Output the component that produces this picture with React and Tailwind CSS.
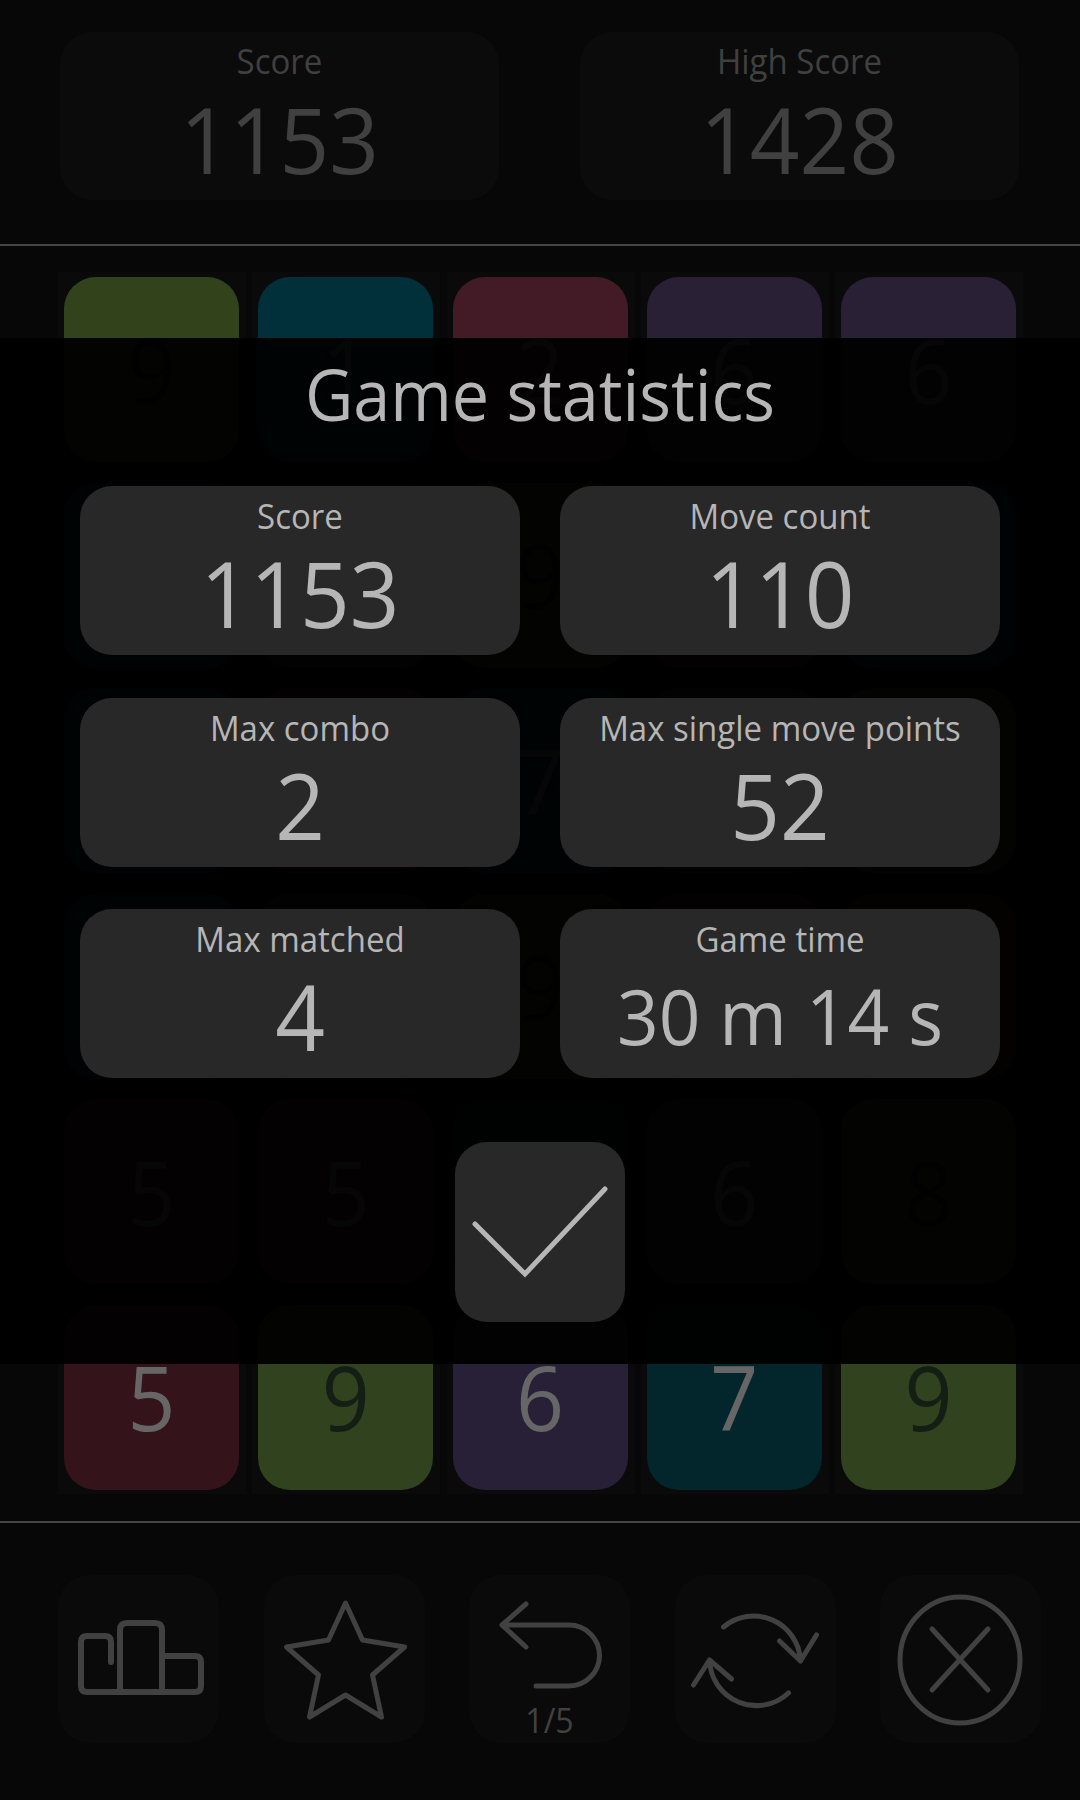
const TILE = {
  g: ["bg-[#32431c]", "text-[#151e15]"],
  t: ["bg-[#02303a]", "text-[#666666]"],
  r: ["bg-[#421b26]", "text-[#666666]"],
  p: ["bg-[#2a2036]", "text-[#666666]"],
  o: ["bg-[#4a2c10]", "text-[#666666]"],
  d: ["bg-[#34141a]", "text-[#666666]"],
  e: ["bg-[#02262c]", "text-[#666666]"],
  q: ["bg-[#282036]", "text-[#666666]"],
  h: ["bg-[#30421e]", "text-[#151e15]"],
};

const BOARD = [
  [["g", 9], ["t", 1], ["r", 2], ["p", 6], ["p", 6]],
  [["t", 1], ["p", 6], ["g", 9], ["r", 2], ["t", 7]],
  [["t", 7], ["r", 5], ["t", 7], ["p", 6], ["g", 9]],
  [["t", 1], ["p", 6], ["g", 9], ["r", 2], ["o", 3]],
  [["d", 5], ["d", 5], ["e", 7], ["q", 6], ["h", 8]],
  [["d", 5], ["h", 9], ["q", 6], ["e", 7], ["h", 9]],
];

const STATS = [
  ["Score", "1153", "text-[87px]"],
  ["Move count", "110", "text-[87px]"],
  ["Max combo", "2", "text-[87px]"],
  ["Max single move points", "52", "text-[87px]"],
  ["Max matched", "4", "text-[87px]"],
  ["Game time", "30 m 14 s", "text-[73px]"],
];

function HeaderCard({ label, value }) {
  return (
    <div className="w-[439px] h-[168px] rounded-[32px] bg-[#0b0b0b] flex flex-col items-center text-[#404040]">
      <div className="text-[33px] leading-[44px] mt-[7px] scale-y-[1.06]">{label}</div>
      <div className="text-[87px] leading-[100px] mt-[5px] scale-y-[1.06]">{value}</div>
    </div>
  );
}

function Stat({ label, value, size }) {
  return (
    <div className="h-[169px] rounded-[32px] bg-[#282828] flex flex-col items-center text-[#b6b6b6]">
      <div className="text-[33px] leading-[44px] mt-[8px] scale-y-[1.06]">{label}</div>
      <div className={`${size} leading-[100px] mt-[4px] whitespace-nowrap scale-y-[1.06]`}>{value}</div>
    </div>
  );
}

function Bar({ children, view, extra }) {
  return (
    <div className="relative w-[161px] h-[168px] rounded-[32px] bg-[#0a0a0a]">
      <svg className="w-full h-full" viewBox={view} fill="none" stroke="#414141" strokeWidth="5" strokeLinecap="round" strokeLinejoin="round">
        {children}
      </svg>
      {extra}
    </div>
  );
}

export default function App() {
  return (
    <div className="relative w-[1080px] h-[1800px] overflow-hidden bg-[#070707] font-['Open_Sans',sans-serif]">
      <div className="h-[244px] pt-[32px] pl-[60px] flex gap-[81px]">
        <HeaderCard label="Score" value="1153" />
        <HeaderCard label="High Score" value="1428" />
      </div>
      <div className="h-[2px] bg-[#454545]" />

      <div className="mt-[26px] ml-[58px] w-[965px] grid grid-cols-[repeat(5,188px)] auto-rows-[194px] gap-x-[6.25px] gap-y-[11.6px]">
        {BOARD.flat().map(([c, n], i) => (
          <div key={i} className="bg-[#0a0a0a] pl-[6px] pr-[7px] pt-[5px] pb-[4px]">
            <div className={`h-full rounded-[32px] flex items-center justify-center text-[84px] ${TILE[c][0]} ${TILE[c][1]}`}>
              <span className="scale-y-[1.06]">{n}</span>
            </div>
          </div>
        ))}
      </div>

      <div className="mt-[27px] h-[2px] bg-[#454545]" />
      <div className="pt-[52px] pl-[58px] flex gap-[44.5px]">
        <Bar view="58 1575 161 168">
          <g strokeWidth="6">
            <path d="M111 1662V1642Q111 1636 105 1636H87Q81 1636 81 1642V1686Q81 1692 87 1692H195Q201 1692 201 1686V1662Q201 1656 195 1656H162" />
            <path d="M120 1692V1630Q120 1623 127 1623H155Q162 1623 162 1630V1692" />
          </g>
        </Bar>
        <Bar view="263.5 1575 161 168">
          <path d="M345 1603L362 1640L404 1647L372 1675L381 1717L345 1695L309 1717L318 1675L286 1647L328 1640Z" />
        </Bar>
        <Bar
          view="469 1575 161 168"
          extra={<div className="absolute left-0 right-0 top-[123px] text-center text-[32px] leading-[44px] text-[#414141] scale-y-[1.06]">1/5</div>}
        >
          <path d="M526 1604L502 1625L526 1647M502 1625H569A30.5 30.5 0 0 1 569 1686H536" />
        </Bar>
        <Bar view="674.5 1575 161 168">
          <path d="M723 1627A47 47 0 0 1 800 1660M779 1641L800 1661L816 1635" />
          <path d="M788 1693A47 47 0 0 1 709 1660M693 1685L709 1660L731 1679" />
        </Bar>
        <Bar view="880 1575 161 168">
          <ellipse cx="960" cy="1660" rx="60" ry="63" />
          <path d="M932 1629L988 1690M988 1629L932 1690" />
        </Bar>
      </div>

      <div className="absolute left-0 right-0 top-[338px] h-[1026px] bg-black/94 flex flex-col items-center">
        <div className="h-[148px] text-[66.5px] leading-[105px] text-[#b6b6b6] scale-y-[1.06] origin-top">Game statistics</div>
        <div className="w-[920px] grid grid-cols-2 gap-x-[40px] gap-y-[42.5px]">
          {STATS.map(([l, v, s]) => (
            <Stat key={l} label={l} value={v} size={s} />
          ))}
        </div>
        <div className="mt-[64px] w-[170px] h-[180px] rounded-[32px] bg-[#282828]">
          <svg className="w-full h-full" viewBox="455 1142 170 180" fill="none" stroke="#b6b6b6" strokeWidth="5" strokeLinecap="round" strokeLinejoin="miter">
            <path d="M475 1224L525 1274L605 1189" />
          </svg>
        </div>
      </div>
    </div>
  );
}
